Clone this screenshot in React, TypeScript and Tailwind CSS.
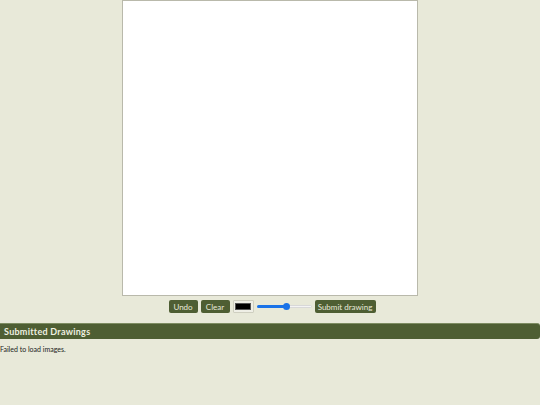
export default function App() {
  return (
    <div className="min-h-[405px] bg-[#e8e9d9] font-['Lato',sans-serif] text-black">
      {/* drawing surface */}
      <div className="flex justify-center">
        <div className="h-[296px] w-[296px] border border-[#b9b9ab] bg-white" />
      </div>

      {/* toolbar */}
      <div className="mt-[4px] flex items-center justify-center gap-[3px] pl-[4px]">
        <button className="h-[13px] w-[29px] rounded-[2px] bg-[#4e5e33] text-[8px] leading-none text-[#e8e9d9]">
          Undo
        </button>
        <button className="h-[13px] w-[29px] rounded-[2px] bg-[#4e5e33] text-[8px] leading-none text-[#e8e9d9]">
          Clear
        </button>
        <div className="flex h-[13px] w-[21px] items-center justify-center rounded-[1px] border border-[#cfcfc0] bg-[#efefe6]">
          <div className="h-[7px] w-[16px] border border-[#555] bg-black" />
        </div>
        <div className="relative h-[13px] w-[55px]">
          <div className="absolute left-0 right-0 top-[5px] h-[3px] rounded-full border border-[#d8d8d8] bg-[#f4f4f4]" />
          <div className="absolute left-0 top-[5px] h-[3px] w-[30px] rounded-full bg-[#1a73e8]" />
          <div className="absolute left-[26px] top-[3px] h-[7px] w-[7px] rounded-full bg-[#1a73e8]" />
        </div>
        <button className="h-[13px] w-[61px] rounded-[2px] bg-[#4e5e33] text-[8px] leading-none text-[#e8e9d9]">
          Submit drawing
        </button>
      </div>

      {/* gallery */}
      <div className="mt-[10px] flex h-[16px] items-center rounded-r-[3px] border-t border-[#7d8c62] bg-[#4e5e33] pl-[4px]">
        <h2 className="text-[9px] font-bold tracking-[0.03em] text-[#eef0e0]">Submitted Drawings</h2>
      </div>
      <p className="mt-[5px] text-[7px] text-[#222]">Failed to load images.</p>
    </div>
  )
}
